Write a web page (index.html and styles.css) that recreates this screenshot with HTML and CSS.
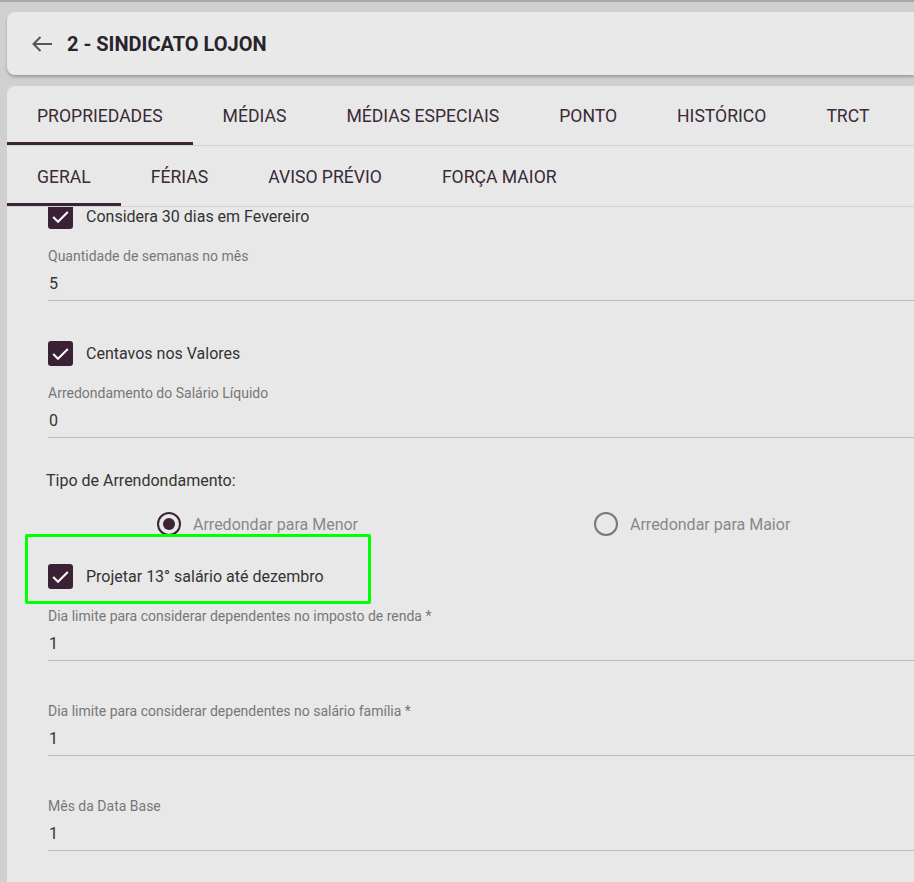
FILE: index.html
```html
<!DOCTYPE html>
<html lang="pt">
<head>
<meta charset="utf-8">
<title>Sindicato</title>
<link rel="stylesheet" href="styles.css">
</head>
<body>
<div class="page">
  <header class="header-card">
    <svg class="back" viewBox="0 0 22 18" width="22" height="18"><path d="M21 9H2.5M9.5 2L2.5 9l7 7" fill="none" stroke="#555" stroke-width="2"/></svg>
    <h1 class="title">2 - SINDICATO LOJON</h1>
  </header>
  <main class="main-card">
    <nav class="tabs">
      <div class="tab active">PROPRIEDADES</div>
      <div class="tab">MÉDIAS</div>
      <div class="tab">MÉDIAS ESPECIAIS</div>
      <div class="tab">PONTO</div>
      <div class="tab">HISTÓRICO</div>
      <div class="tab">TRCT</div>
    </nav>
    <nav class="tabs tabs-sub">
      <div class="tab active">GERAL</div>
      <div class="tab">FÉRIAS</div>
      <div class="tab">AVISO PRÉVIO</div>
      <div class="tab">FORÇA MAIOR</div>
    </nav>
    <section class="content">
      <label class="check-row first">
        <span class="checkbox"><svg viewBox="0 0 25 25" width="25" height="25"><path d="M5.2 13l4.8 4.8L19.8 8" fill="none" stroke="#fff" stroke-width="2"/></svg></span>
        <span class="check-label">Considera 30 dias em Fevereiro</span>
      </label>
      <div class="field">
        <div class="field-label">Quantidade de semanas no mês</div>
        <div class="field-value">5</div>
      </div>
      <label class="check-row">
        <span class="checkbox"><svg viewBox="0 0 25 25" width="25" height="25"><path d="M5.2 13l4.8 4.8L19.8 8" fill="none" stroke="#fff" stroke-width="2"/></svg></span>
        <span class="check-label">Centavos nos Valores</span>
      </label>
      <div class="field">
        <div class="field-label">Arredondamento do Salário Líquido</div>
        <div class="field-value">0</div>
      </div>
      <div class="group-title">Tipo de Arrendondamento:</div>
      <div class="radio-group">
        <div class="radio-item"><span class="radio checked"></span><span class="radio-label">Arredondar para Menor</span></div>
        <div class="radio-item"><span class="radio"></span><span class="radio-label">Arredondar para Maior</span></div>
      </div>
      <label class="check-row third">
        <span class="checkbox"><svg viewBox="0 0 25 25" width="25" height="25"><path d="M5.2 13l4.8 4.8L19.8 8" fill="none" stroke="#fff" stroke-width="2"/></svg></span>
        <span class="check-label">Projetar 13° salário até dezembro</span>
      </label>
      <div class="field">
        <div class="field-label">Dia limite para considerar dependentes no imposto de renda *</div>
        <div class="field-value">1</div>
      </div>
      <div class="field">
        <div class="field-label">Dia limite para considerar dependentes no salário família *</div>
        <div class="field-value">1</div>
      </div>
      <div class="field">
        <div class="field-label">Mês da Data Base</div>
        <div class="field-value">1</div>
      </div>
      <div class="highlight"></div>
    </section>
  </main>
</div>
</body>
</html>
```

FILE: styles.css
```css
* { box-sizing: border-box; }
html, body { margin: 0; padding: 0; height: 100%; overflow: hidden; }
body {
  background: #d0d0d0;
  border-top: 2px solid #a9a9a9;
  font-family: Roboto, "Liberation Sans", sans-serif;
  color: #333;
}
.page {
  padding: 10px 0 0 7px;
  display: flex;
  flex-direction: column;
  height: 100%;
}
.header-card {
  height: 63px;
  background: #e9e9e9;
  border-radius: 8px 0 0 8px;
  box-shadow: 0 2px 3px rgba(0,0,0,0.25);
  display: flex;
  align-items: center;
  padding-left: 24px;
  gap: 14px;
  flex: none;
}
.back { display: block; flex: none; }
.title {
  margin: 0;
  font-size: 20px;
  font-weight: 700;
  color: #29232b;
}
.main-card {
  margin-top: 11px;
  background: #e8e8e8;
  border-radius: 8px 0 0 0;
  flex: 1;
  position: relative;
  display: flex;
  flex-direction: column;
  overflow: hidden;
}
.tabs {
  display: flex;
  height: 60px;
  border-bottom: 1px solid #d2d2d2;
  flex: none;
}
.tabs-sub { height: 61px; }
.tab {
  padding: 0 30px;
  display: flex;
  align-items: center;
  font-size: 17.6px;
  font-weight: 400;
  color: #3a2a37;
  border-bottom: 3px solid transparent;
  padding-top: 3px;
  white-space: nowrap;
}
.tabs-sub .tab { padding-top: 5px; }
.tab.active { border-bottom-color: #3b2436; }
.content {
  flex: 1;
  padding-left: 41px;
  overflow: hidden;
  position: relative;
}
.check-row {
  display: flex;
  align-items: center;
  height: 24px;
  gap: 13px;
}
.check-row.first { margin-top: -3px; }
.checkbox {
  width: 25px;
  height: 25px;
  border-radius: 3px;
  background: #3a2136;
  display: flex;
  align-items: center;
  justify-content: center;
  flex: none;
}
.checkbox svg { display: block; }
.check-label { font-size: 16px; color: #333; }
.field { margin-top: 18px; margin-bottom: 40px; }
.field + .field { margin-top: 0; }
.field-label {
  font-size: 14px;
  line-height: 20px;
  color: #777;
}
.field-value {
  font-size: 16px;
  line-height: 24px;
  padding: 6px 0 4px 1px;
  color: #333;
  border-bottom: 1px solid #bdbdbd;
}
.group-title {
  margin-top: -7px;
  margin-left: -2px;
  font-size: 16px;
  line-height: 20px;
  color: #333;
}
.radio-group {
  display: grid;
  grid-template-columns: 437px 1fr;
  margin-top: 21px;
  padding-left: 109px;
}
.radio-item {
  display: flex;
  align-items: center;
  gap: 12px;
  height: 24px;
}
.radio {
  width: 24px;
  height: 24px;
  border-radius: 50%;
  border: 2px solid #777;
  display: flex;
  align-items: center;
  justify-content: center;
  flex: none;
}
.radio.checked { border-color: #3b2436; }
.radio.checked::after {
  content: "";
  width: 12px;
  height: 12px;
  border-radius: 50%;
  background: #3b2436;
}
.radio-label { font-size: 16px; color: #888; }
.check-row.third { margin-top: 28px; }
.highlight {
  position: absolute;
  left: 18px;
  top: 327px;
  width: 346px;
  height: 70px;
  border: 3px solid #00ff00;
  border-radius: 2px;
  pointer-events: none;
}
```
